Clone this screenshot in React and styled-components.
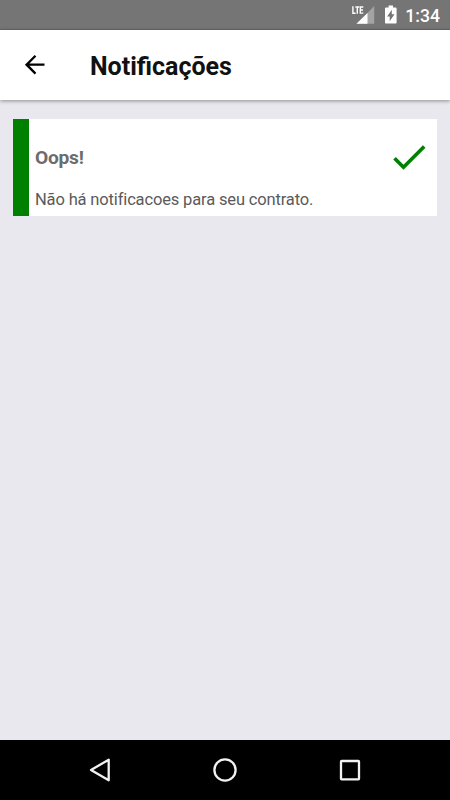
import React from "react";
import styled, { createGlobalStyle } from "styled-components";

const notifications = [
  {
    id: 1,
    title: "Oops!",
    message: "Não há notificacoes para seu contrato.",
    color: "#008000",
  },
];

export default function App() {
  return (
    <Screen>
      <GlobalStyle />
      <StatusBar>
        <SignalIcon />
        <BatteryIcon />
        <Clock>1:34</Clock>
      </StatusBar>
      <Header>
        <BackButton aria-label="Voltar">
          <svg width="29.4" height="29.4" viewBox="0 0 24 24" fill="#000">
            <path d="M20 11.1H7.7l5.6-5.7L12 4l-8 8 8 8 1.3-1.4L7.7 12.9H20z" />
          </svg>
        </BackButton>
        <Title>Notificações</Title>
      </Header>
      <Content>
        {notifications.map((item) => (
          <Card key={item.id} $color={item.color}>
            <CardRow>
              <CardTitle>{item.title}</CardTitle>
              <svg width="44" height="44" viewBox="0 0 24 24" fill={item.color}>
                <path d="M9 16.17L4.83 12l-1.42 1.41L9 19 21 7l-1.41-1.41z" />
              </svg>
            </CardRow>
            <CardMessage>{item.message}</CardMessage>
          </Card>
        ))}
      </Content>
      <NavBar>
        <svg width="24" height="28" viewBox="0 0 24 28">
          <path d="M3 14L20.7 3.7v20.6z" />
        </svg>
        <svg width="28" height="28" viewBox="0 0 28 28">
          <circle cx="14" cy="14" r="10.6" />
        </svg>
        <svg width="24" height="28" viewBox="0 0 24 28">
          <rect x="3" y="5" width="18" height="18.4" rx="0.6" />
        </svg>
      </NavBar>
    </Screen>
  );
}

function SignalIcon() {
  return (
    <svg width="24" height="20" viewBox="0 0 24 20">
      <path d="M23.2 1v17.800H6z" fill="#a3a3a3" />
      <path d="M16.5 8v10.800H5.400z" fill="#fff" />
      <rect x="0" y="0" width="14" height="9.5" fill="#757575" />
      <path
        d="M1.9 1.3v6.900h2.700M4.400 2h3.800M6.300 2v6.700M12.300 2H9.300v6.100h3M9.300 5h2.700"
        fill="none"
        stroke="#fff"
        strokeWidth="1.4"
      />
    </svg>
  );
}

function BatteryIcon() {
  return (
    <svg width="12" height="20" viewBox="0 0 12 20">
      <path d="M3.6 0.6h4.400v1.800h2.400a1.200 1.200 0 0 1 1.200 1.200v13.800a1.200 1.200 0 0 1-1.200 1.200H1.200A1.200 1.200 0 0 1 0 17.400V3.600A1.200 1.200 0 0 1 1.200 2.400h2.400z" fill="#fff" />
      <path d="M6.8 4.700v4.500h2.700L4.700 16.300v-4.700H2.100z" fill="#757575" />
    </svg>
  );
}

const GlobalStyle = createGlobalStyle`
  body {
    margin: 0;
    font-family: Roboto, sans-serif;
  }

  svg {
    display: block;
    flex: none;
  }
`;

const Screen = styled.div`
  display: flex;
  flex-direction: column;
  width: 450px;
  height: 800px;
  background: #e9e8ef;
  overflow: hidden;
`;

const StatusBar = styled.div`
  display: flex;
  align-items: center;
  justify-content: flex-end;
  box-sizing: border-box;
  height: 30px;
  padding-right: 10px;
  background: #757575;
  border-bottom: 1px solid #6a6a6a;

  svg:nth-child(2) {
    margin: 1px 8px 0 10px;
  }
`;

const Clock = styled.span`
  color: #fff;
  font-size: 17.6px;
  font-weight: 500;
  line-height: 20px;
  padding-top: 2px;
`;

const Header = styled.header`
  display: flex;
  align-items: center;
  height: 70px;
  background: #fff;
  box-shadow: 0 1px 4px rgba(0, 0, 0, 0.4);
`;

const BackButton = styled.button`
  margin: 0 0 0 20.4px;
  padding: 0;
  border: 0;
  background: none;
`;

const Title = styled.h1`
  margin: 4px 0 0 40.2px;
  font-size: 25px;
  font-weight: 700;
  line-height: 30px;
  color: #111;
`;

const Content = styled.main`
  flex: 1;
  padding: 19px 13px;
`;

const Card = styled.article`
  box-sizing: border-box;
  height: 97px;
  padding: 16px 6px 0;
  background: #fff;
  border-left: 16px solid ${(props) => props.$color};
`;

const CardRow = styled.div`
  display: flex;
  align-items: center;
  justify-content: space-between;
  height: 44px;
`;

const CardTitle = styled.h2`
  margin: 2px 0 0;
  font-size: 19.2px;
  font-weight: 700;
  line-height: 24px;
  letter-spacing: -0.25px;
  color: #6c6c6c;
`;

const CardMessage = styled.p`
  margin: 11px 0 0;
  font-size: 16.5px;
  line-height: 20px;
  letter-spacing: -0.15px;
  color: #5a5a5a;
  white-space: nowrap;
`;

const NavBar = styled.nav`
  display: flex;
  align-items: center;
  justify-content: space-between;
  box-sizing: border-box;
  height: 60px;
  padding: 0 88px;
  background: #000;

  svg {
    fill: none;
    stroke: #f2f2f2;
    stroke-width: 2.3;
    stroke-linejoin: round;
  }
`;
